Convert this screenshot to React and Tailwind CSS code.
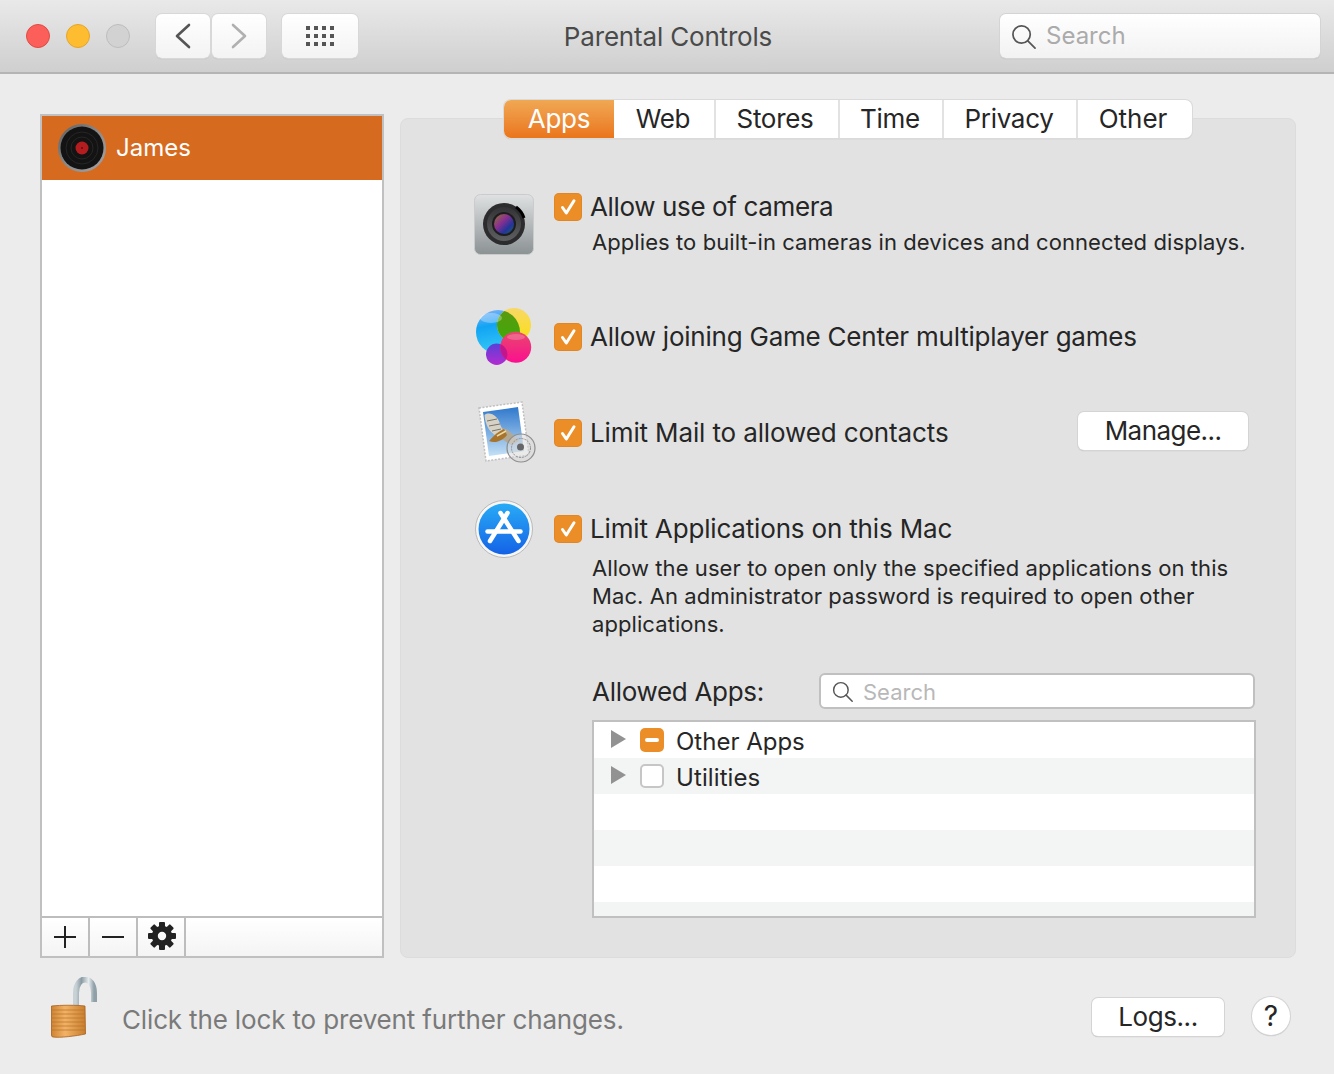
import React from "react";

function Check() {
  return (
    <span className="flex h-[28px] w-[28px] shrink-0 items-center justify-center rounded-[5px] bg-[#ec8e28] shadow-[inset_0_0_0_1px_rgba(210,120,30,0.35)]">
      <svg width="28" height="28" viewBox="0 0 28 28" fill="none">
        <path d="M8.5 14.5 L12.3 20 L20 7.8" stroke="white" strokeWidth="3" strokeLinecap="round" strokeLinejoin="round" />
      </svg>
    </span>
  );
}

function SearchIcon({ size }) {
  return (
    <svg width={size} height={size} viewBox="0 0 26 26" fill="none" stroke="#555" strokeWidth="1.8" strokeLinecap="round">
      <circle cx="11" cy="11" r="9" />
      <path d="M17.5 17.5 L25 25" />
    </svg>
  );
}

function Gear() {
  return (
    <svg width="28" height="28" viewBox="0 0 28 28" fill="#222">
      {[0, 45, 90, 135, 180, 225, 270, 315].map((a) => (
        <rect key={a} x="11" y="0" width="6" height="7" rx="1" transform={`rotate(${a} 14 14)`} />
      ))}
      <circle cx="14" cy="14" r="7.2" fill="none" stroke="#222" strokeWidth="6" />
    </svg>
  );
}

function Camera() {
  return (
    <svg width="60" height="62" viewBox="474 194 60 62" className="shrink-0">
      <defs>
        <linearGradient id="cambg" x1="0" y1="0" x2="0" y2="1">
          <stop offset="0" stopColor="#dfe1e2" />
          <stop offset="1" stopColor="#8b9294" />
        </linearGradient>
        <linearGradient id="camlens" x1="0" y1="0" x2="1" y2="1">
          <stop offset="0" stopColor="#8f7a2c" />
          <stop offset="0.4" stopColor="#8a2f90" />
          <stop offset="0.7" stopColor="#24349a" />
          <stop offset="1" stopColor="#176a60" />
        </linearGradient>
        <linearGradient id="camring" x1="0" y1="0" x2="0" y2="1">
          <stop offset="0" stopColor="#333335" />
          <stop offset="1" stopColor="#5e5f61" />
        </linearGradient>
      </defs>
      <rect x="474.5" y="194.5" width="59" height="60" rx="6" fill="url(#cambg)" stroke="#c9cbcc" />
      <circle cx="504" cy="224" r="21" fill="#2c2c2e" />
      <circle cx="504" cy="224" r="17" fill="url(#camring)" />
      <circle cx="504" cy="224" r="12" fill="#1d1d1f" />
      <circle cx="504" cy="224" r="10" fill="url(#camlens)" />
      <path d="M516 207 A21 21 0 0 1 524 218" stroke="#000" strokeWidth="3" fill="none" />
    </svg>
  );
}

function GameCenter() {
  return (
    <svg width="60" height="62" viewBox="474 306 60 62" className="shrink-0">
      <defs>
        <linearGradient id="gcb" x1="0" y1="0" x2="0.2" y2="1">
          <stop offset="0" stopColor="#8ab4f8" />
          <stop offset="0.4" stopColor="#12a4f4" />
          <stop offset="1" stopColor="#35c8f5" />
        </linearGradient>
        <linearGradient id="gcy" x1="0" y1="0" x2="0" y2="1">
          <stop offset="0" stopColor="#f8d868" />
          <stop offset="1" stopColor="#fadf10" />
        </linearGradient>
        <linearGradient id="gcg" x1="0" y1="0" x2="0" y2="1">
          <stop offset="0" stopColor="#5a9a10" />
          <stop offset="1" stopColor="#3eaa08" />
        </linearGradient>
        <linearGradient id="gcp" x1="0" y1="0" x2="0" y2="1">
          <stop offset="0" stopColor="#e8486c" />
          <stop offset="1" stopColor="#fb0f90" />
        </linearGradient>
        <linearGradient id="gcv" x1="0" y1="0" x2="0" y2="1">
          <stop offset="0" stopColor="#5a40d8" />
          <stop offset="1" stopColor="#b42ad0" />
        </linearGradient>
        <clipPath id="gcclip2"><circle cx="515.7" cy="347.3" r="15.5" /></clipPath>
      </defs>
      <circle cx="498" cy="332" r="22" fill="url(#gcb)" />
      <circle cx="514" cy="325" r="17" fill="url(#gcy)" />
      <path d="M504.4 311 A17 17 0 0 0 517.8 341.6 A22 22 0 0 0 504.4 311 Z" fill="url(#gcg)" />
      <circle cx="496.7" cy="354.3" r="10.7" fill="url(#gcv)" />
      <circle cx="515.7" cy="347.3" r="15.5" fill="url(#gcp)" />
      <g clipPath="url(#gcclip2)">
        <circle cx="496.7" cy="354.3" r="10.7" fill="#c0188c" />
      </g>
      <ellipse cx="491" cy="318" rx="11" ry="5" fill="white" opacity="0.3" />
      <ellipse cx="516" cy="337" rx="9" ry="3" fill="white" opacity="0.2" />
    </svg>
  );
}

function Mail() {
  return (
    <svg width="64" height="66" viewBox="474 400 64 66" className="shrink-0">
      <defs>
        <linearGradient id="msky" x1="0" y1="0" x2="0" y2="1">
          <stop offset="0" stopColor="#2f78cc" />
          <stop offset="1" stopColor="#c4e0f6" />
        </linearGradient>
      </defs>
      <path d="M479 408 L522 402 L529 455 L486 461 Z" fill="white" stroke="#bfbfbf" strokeWidth="1.5" strokeDasharray="2 1.5" />
      <path d="M483 412 L518 407 L524 451 L489 456 Z" fill="url(#msky)" />
      <path d="M500 427 L508 430 L519 441 L511 445 L499 437 Z" fill="#b3a893" />
      <path d="M484.5 415 C490 411 498 416 500 424 L503 431 L497 436 C490 433 485 425 484.5 415 Z" fill="#d6d2c6" />
      <path d="M487 421 L497 419 M489 426 L500 424 M492 431 L501 429" stroke="#6f685c" strokeWidth="0.9" />
      <path d="M489 441 C494 435 499 431 504 429 L507 435 C503 440 496 444 489 441 Z" fill="#a8742c" />
      <path d="M497 436 L506 431" stroke="#e9d9a8" strokeWidth="1.5" />
      <circle cx="521" cy="448" r="14" fill="#d8d8d8" fillOpacity="0.55" stroke="#8d8d8d" strokeWidth="1.2" />
      <circle cx="521" cy="448" r="9.5" fill="none" stroke="#8f8f8f" strokeWidth="1" strokeDasharray="2 1" />
      <circle cx="520.5" cy="447" r="3.5" fill="#666" />
    </svg>
  );
}

function AppStore() {
  return (
    <svg width="60" height="60" viewBox="474 499 60 60" className="shrink-0">
      <defs>
        <linearGradient id="asb" x1="0" y1="0" x2="0" y2="1">
          <stop offset="0" stopColor="#28abf6" />
          <stop offset="1" stopColor="#1462e6" />
        </linearGradient>
      </defs>
      <circle cx="504" cy="529" r="28.5" fill="#f6f6f6" stroke="#b9b9b9" strokeWidth="1" />
      <circle cx="504" cy="529" r="25.5" fill="url(#asb)" />
      <g stroke="white" strokeWidth="4.5" strokeLinecap="round" fill="none">
        <path d="M500.5 513 L518.5 541" />
        <path d="M507.5 513 L490 541" />
        <path d="M487.5 531.5 L520.5 531.5" />
      </g>
    </svg>
  );
}

function Lock() {
  return (
    <svg width="48" height="62" viewBox="50 977 48 62" className="shrink-0">
      <defs>
        <linearGradient id="shk" x1="0" y1="0" x2="1" y2="0">
          <stop offset="0" stopColor="#c8d2d6" />
          <stop offset="0.3" stopColor="#8a9ba3" />
          <stop offset="0.7" stopColor="#e6ecef" />
          <stop offset="1" stopColor="#8fa0a8" />
        </linearGradient>
        <linearGradient id="cop" x1="0" y1="0" x2="1" y2="0">
          <stop offset="0" stopColor="#cf8433" />
          <stop offset="0.4" stopColor="#f2b266" />
          <stop offset="1" stopColor="#c97e2e" />
        </linearGradient>
      </defs>
      <path d="M76 1006 L76 993 C76 975 94 975 94 993 L94 1002" fill="none" stroke="url(#shk)" strokeWidth="6" />
      <path d="M51.5 1006 C60 1005 78 1005 85 1006 L85.5 1034 C76 1036 60 1038 53 1037 Q51.5 1037 51.5 1035 Z" fill="url(#cop)" stroke="#a8601c" strokeWidth="0.8" />
      <g stroke="#b87228" strokeWidth="1" opacity="0.7">
        <path d="M52 1010 H85" />
        <path d="M52 1014 H85" />
        <path d="M52 1018 H85" />
        <path d="M52 1022 H85" />
        <path d="M52 1026 H85" />
        <path d="M52 1030 H85" />
      </g>
    </svg>
  );
}

function Vinyl() {
  return (
    <svg width="48" height="48" viewBox="0 0 48 48" className="shrink-0">
      <defs>
        <linearGradient id="vin" x1="0" y1="0" x2="1" y2="1">
          <stop offset="0" stopColor="#5e5e5e" />
          <stop offset="0.5" stopColor="#8a8a8a" />
          <stop offset="1" stopColor="#a4a4a4" />
        </linearGradient>
      </defs>
      <circle cx="24" cy="24" r="24" fill="url(#vin)" />
      <circle cx="24" cy="24" r="21.5" fill="#131313" />
      <circle cx="24" cy="24" r="16" fill="none" stroke="#262626" strokeWidth="1" />
      <circle cx="24" cy="24" r="11" fill="none" stroke="#262626" strokeWidth="1" />
      <circle cx="24" cy="24" r="6.5" fill="#b41d20" />
      <circle cx="24" cy="24" r="1" fill="#5a1012" />
    </svg>
  );
}

function Triangle() {
  return (
    <svg width="15" height="18" viewBox="0 0 15 18" className="-mt-[2px] shrink-0">
      <path d="M0 0 L15 9 L0 18 Z" fill="#929292" />
    </svg>
  );
}

const tabs = [
  ["Web", "w-[102px] pr-[2px]"],
  ["Stores", "w-[124px] pr-[4px]"],
  ["Time", "w-[104px] pr-[2px]"],
  ["Privacy", "w-[134px] pr-[2px]"],
];

const stripes = ["bg-white h-[36px]", "bg-[#f3f5f4] h-[36px]", "bg-white h-[36px]", "bg-[#f3f5f4] h-[14px]"];

const raised = "bg-white shadow-[0_0_0_1px_#d4d4d4,0_1px_1px_#a8a8a8]";
const toolbar = "bg-linear-to-b from-white to-[#f3f3f3] shadow-[0_0_0_1px_#d8d8d8,0_1px_1px_#a8a8a8]";

export default function App() {
  return (
    <div className="flex h-[1074px] w-[1334px] flex-col overflow-hidden bg-[#ececec] font-['Inter',sans-serif] text-[26px] text-[#262626]">
      {/* Title bar */}
      <header className="relative flex h-[74px] shrink-0 items-center border-b-2 border-[#b4b4b4] bg-linear-to-b from-[#e9e9e9] to-[#cfcfcf] pl-[26px]">
        <span className="h-[24px] w-[24px] rounded-full border border-[#e04a44] bg-[#fc5f59]" />
        <span className="ml-[16px] h-[24px] w-[24px] rounded-full border border-[#e5a52c] bg-[#febc30]" />
        <span className="ml-[16px] h-[24px] w-[24px] rounded-full border border-[#bdbdbd] bg-[#d2d2d2]" />
        <button className={`ml-[26px] flex h-[44px] w-[54px] items-center justify-center rounded-[6px] ${toolbar}`}>
          <svg width="16" height="26" viewBox="0 0 16 26" fill="none" stroke="#555" strokeWidth="2.6" strokeLinecap="round" strokeLinejoin="round">
            <path d="M14 2 L2 13 L14 24" />
          </svg>
        </button>
        <button className={`ml-[2px] flex h-[44px] w-[54px] items-center justify-center rounded-[6px] ${toolbar}`}>
          <svg width="16" height="26" viewBox="0 0 16 26" fill="none" stroke="#b0b0b0" strokeWidth="2.6" strokeLinecap="round" strokeLinejoin="round">
            <path d="M2 2 L14 13 L2 24" />
          </svg>
        </button>
        <button className={`ml-[16px] flex h-[44px] w-[76px] items-center justify-center rounded-[6px] ${toolbar}`}>
          <svg width="28" height="20" viewBox="0 0 28 20" fill="#555">
            {[0, 8, 16].map((y) =>
              [0, 8, 16, 24].map((x) => <rect key={`${x}-${y}`} x={x} y={y} width="4" height="4" />)
            )}
          </svg>
        </button>
        <h1 className="absolute left-[2px] right-0 text-center text-[26px] font-normal tracking-[-0.18px] text-[#4a4a4a]">Parental Controls</h1>
        <div className="relative ml-auto mr-[14px] flex h-[44px] w-[320px] items-center gap-[10px] rounded-[6px] bg-linear-to-b from-white to-[#f2f2f2] pl-[11px] text-[24px] text-[#ababab] shadow-[0_0_0_1px_#d4d4d4,0_1px_1px_#a8a8a8]">
          <SearchIcon size={25} />
          <span>Search</span>
        </div>
      </header>

      {/* Main */}
      <div className="flex items-start pl-[40px] pt-[40px]">
        {/* Sidebar */}
        <aside className="flex h-[844px] w-[344px] shrink-0 flex-col border-2 border-[#c0c0c0] bg-white">
          <div className="flex h-[64px] items-center gap-[10px] bg-[#d66b20] pl-[16px] text-[24px] text-white">
            <Vinyl />
            <span>James</span>
          </div>
          <div className="flex-1" />
          <div className="flex h-[40px] border-t-2 border-[#bdbdbd] bg-linear-to-b from-white to-[#f4f4f4]">
            <button className="flex w-[48px] items-center justify-center border-r-2 border-[#bdbdbd]">
              <svg width="24" height="24" viewBox="0 0 24 24" stroke="#222" strokeWidth="2"><path d="M12 1 V23 M1 12 H23" /></svg>
            </button>
            <button className="flex w-[48px] items-center justify-center border-r-2 border-[#bdbdbd]">
              <svg width="24" height="24" viewBox="0 0 24 24" stroke="#222" strokeWidth="2"><path d="M1 12 H23" /></svg>
            </button>
            <button className="flex w-[48px] items-center justify-center border-r-2 border-[#bdbdbd] pb-[2px] pl-[2px]">
              <Gear />
            </button>
          </div>
        </aside>

        {/* Panel */}
        <main className="ml-[16px] mt-[4px] h-[840px] w-[896px] shrink-0 rounded-[8px] border border-[#dcdcdc] bg-[#e2e2e2] pl-[73px] pr-[39px]">
          <nav className="relative -ml-[73px] -mr-[39px] -mt-[19px] flex justify-center">
            <div className="flex h-[38px] rounded-[7px] bg-white shadow-[0_0_0_1px_#dadada,0_1px_1px_#a8a8a8]">
              <div className="flex w-[110px] items-center justify-center rounded-l-[7px] bg-linear-to-b from-[#f0a853] to-[#ea7519] pb-[2px] tracking-[-0.2px] text-white">Apps</div>
              {tabs.map(([t, w]) => (
                <div key={t} className={`flex ${w} items-center justify-center border-r-2 border-[#e2e2e2] pb-[2px] tracking-[-0.3px]`}>{t}</div>
              ))}
              <div className="flex w-[114px] items-center justify-center pb-[2px] pr-[4px]">Other</div>
            </div>
          </nav>

          <div className="mt-[54px] flex h-[30px] items-center">
            <div className="flex h-[30px] w-[60px] shrink-0 translate-y-[18px] items-center justify-center"><Camera /></div>
            <div className="ml-[20px]"><Check /></div>
            <span className="ml-[8px] whitespace-nowrap pb-[2px] tracking-[-0.37px]">Allow use of camera</span>
          </div>
          <p className="ml-[118px] mt-[6px] whitespace-nowrap text-[22px] leading-[28px] tracking-[0.08px]">Applies to built-in cameras in devices and connected displays.</p>

          <div className="mt-[66px] flex h-[30px] items-center">
            <div className="flex h-[30px] w-[60px] shrink-0 items-center justify-center"><GameCenter /></div>
            <div className="ml-[20px]"><Check /></div>
            <span className="ml-[8px] whitespace-nowrap pb-[2px] tracking-[-0.23px]">Allow joining Game Center multiplayer games</span>
          </div>

          <div className="mt-[66px] flex h-[30px] items-center">
            <div className="flex h-[30px] w-[60px] shrink-0 items-center justify-start"><Mail /></div>
            <div className="ml-[20px]"><Check /></div>
            <span className="ml-[8px] whitespace-nowrap pb-[2px] tracking-[-0.13px]">Limit Mail to allowed contacts</span>
            <button className={`ml-auto mr-[8px] -mt-[4px] flex h-[38px] w-[170px] shrink-0 items-center justify-center rounded-[6px] pb-[2px] tracking-[-0.55px] ${raised}`}>Manage...</button>
          </div>

          <div className="mt-[66px] flex h-[30px] items-center">
            <div className="flex h-[30px] w-[60px] shrink-0 items-center justify-center"><AppStore /></div>
            <div className="ml-[20px]"><Check /></div>
            <span className="ml-[8px] whitespace-nowrap pb-[2px] tracking-[-0.17px]">Limit Applications on this Mac</span>
          </div>
          <p className="ml-[118px] mt-[10px] whitespace-nowrap text-[22px] leading-[28px] tracking-[0.08px]">
            Allow the user to open only the specified applications on this<br />
            Mac. An administrator password is required to open other<br />
            applications.
          </p>

          <div className="ml-[118px] mt-[35px] flex h-[36px] items-center">
            <span className="w-[227px] shrink-0 tracking-[-0.3px]">Allowed Apps:</span>
            <div className="flex h-[36px] w-[436px] items-center gap-[10px] rounded-[6px] border-2 border-[#c0c0c0] bg-white pl-[11px] text-[22px] text-[#b8b8b8]">
              <SearchIcon size={21} />
              <span className="pt-[2px]">Search</span>
            </div>
          </div>

          <div className="ml-[118px] mt-[11px] h-[198px] w-[664px] border-2 border-[#c0c0c0] bg-white text-[24px]">
            <div className="flex h-[36px] items-center bg-white pl-[17px]">
              <Triangle />
              <span className="ml-[14px] flex h-[24px] w-[24px] items-center justify-center rounded-[5px] bg-[#ec8e28]">
                <span className="h-[4px] w-[14px] rounded-full bg-white" />
              </span>
              <span className="ml-[12px] pt-[3px]">Other Apps</span>
            </div>
            <div className="flex h-[36px] items-center bg-[#f3f5f4] pl-[17px]">
              <Triangle />
              <span className="ml-[14px] h-[24px] w-[24px] rounded-[5px] border-2 border-[#c6c6c6] bg-white" />
              <span className="ml-[12px] pt-[3px] tracking-[0.1px]">Utilities</span>
            </div>
            {stripes.map((c, i) => (
              <div key={i} className={c} />
            ))}
          </div>
        </main>
      </div>

      {/* Footer */}
      <footer className="mt-[19px] flex items-start pl-[50px]">
        <Lock />
        <span className="ml-[24px] mt-[28px] whitespace-nowrap leading-[30px] tracking-[-0.15px] text-[#7a7a7a]">Click the lock to prevent further changes.</span>
        <button className={`ml-auto mt-[21px] flex h-[38px] w-[132px] shrink-0 items-center justify-center rounded-[6px] pb-[2px] tracking-[-0.4px] ${raised}`}>Logs...</button>
        <button className={`ml-[28px] mr-[44px] mt-[20px] flex h-[38px] w-[38px] shrink-0 items-center justify-center rounded-full text-[28px] ${raised}`}>?</button>
      </footer>
    </div>
  );
}
